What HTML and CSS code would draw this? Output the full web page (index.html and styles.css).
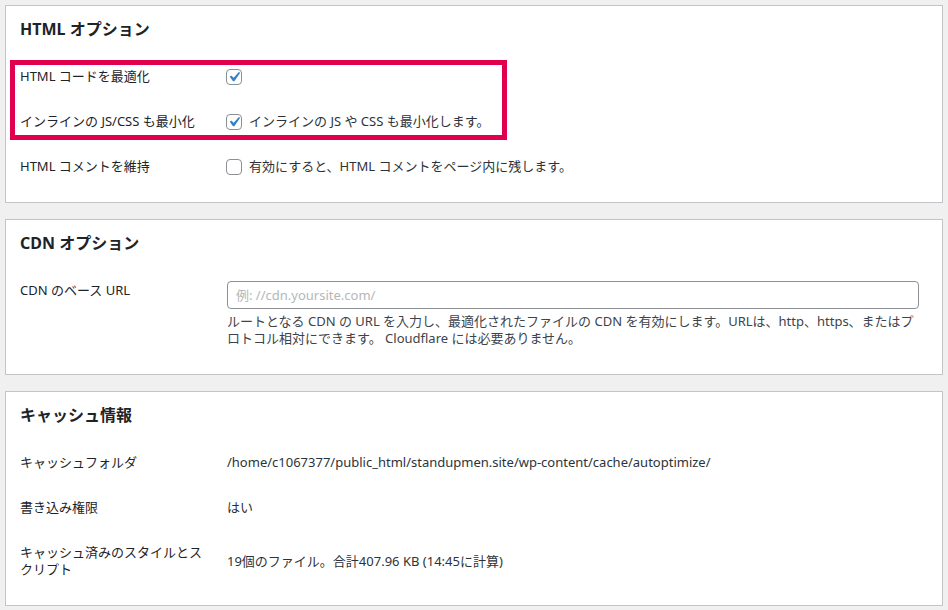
FILE: index.html
```html
<!DOCTYPE html>
<html lang="ja">
<head>
  <meta charset="UTF-8">
  <meta name="viewport" content="width=device-width, initial-scale=1.0">
  <title>Autoptimize 設定</title>
  <link rel="stylesheet" href="styles.css">
</head>
<body>
  <div class="panel panel-html">
    <h2>HTML オプション</h2>
    <div class="row">
      <div class="label">HTML コードを最適化</div>
      <div class="value">
        <span class="checkbox checked"><svg viewBox="0 0 20 20"><path d="M14.83 4.89l1.34.94-5.81 8.38H9.02L5.78 9.67l1.34-1.25 2.57 2.4z"/></svg></span>
      </div>
    </div>
    <div class="row">
      <div class="label">インラインの JS/CSS も最小化</div>
      <div class="value">
        <span class="checkbox checked"><svg viewBox="0 0 20 20"><path d="M14.83 4.89l1.34.94-5.81 8.38H9.02L5.78 9.67l1.34-1.25 2.57 2.4z"/></svg></span>
        <span>インラインの JS や CSS も最小化します。</span>
      </div>
    </div>
    <div class="row">
      <div class="label">HTML コメントを維持</div>
      <div class="value">
        <span class="checkbox"></span>
        <span>有効にすると、HTML コメントをページ内に残します。</span>
      </div>
    </div>
    <div class="highlight"></div>
  </div>

  <div class="panel">
    <h2>CDN オプション</h2>
    <div class="row row-top">
      <div class="label">CDN のベース URL</div>
      <div class="value value-stack">
        <input type="text" class="text-input" placeholder="例: //cdn.yoursite.com/">
        <p class="description">ルートとなる CDN の URL を入力し、最適化されたファイルの CDN を有効にします。URLは、http、https、またはプロトコル相対にできます。 Cloudflare には必要ありません。</p>
      </div>
    </div>
  </div>

  <div class="panel">
    <h2>キャッシュ情報</h2>
    <div class="row">
      <div class="label">キャッシュフォルダ</div>
      <div class="value">/home/c1067377/public_html/standupmen.site/wp-content/cache/autoptimize/</div>
    </div>
    <div class="row">
      <div class="label">書き込み権限</div>
      <div class="value">はい</div>
    </div>
    <div class="row">
      <div class="label">キャッシュ済みのスタイルとスクリプト</div>
      <div class="value">19個のファイル。合計407.96 KB (14:45に計算)</div>
    </div>
  </div>
</body>
</html>
```

FILE: styles.css
```css
body {
  margin: 0;
  padding: 5px;
  background-color: #f0f0f1;
  font-family: "Noto Sans", "Noto Sans CJK JP", sans-serif;
  font-size: 13px;
  line-height: 17px;
  color: #1d2327;
}
.panel {
  position: relative;
  background-color: #fff;
  border: 1px solid #c3c4c7;
  padding: 12px 14px 13px 14px;
  margin-bottom: 16px;
}
.panel:last-child {
  margin-bottom: 0;
}
h2 {
  margin: 0 0 14px 0;
  font-size: 16px;
  line-height: 22px;
  font-weight: bold;
  color: #1d2327;
}
.row {
  display: grid;
  grid-template-columns: 190px 1fr;
  column-gap: 16px;
  align-items: center;
  padding: 14px 0;
}
.row-top {
  align-items: start;
}
.label {
  color: #1d2327;
}
.value {
  display: flex;
  align-items: center;
  gap: 7px;
  color: #2c3338;
  padding-left: 1px;
}
.value-stack {
  display: block;
  margin-top: -1px;
}
.checkbox {
  position: relative;
  display: inline-block;
  width: 14px;
  height: 14px;
  border: 1px solid #8c8f94;
  border-radius: 4px;
  background-color: #fff;
  flex-shrink: 0;
  margin-left: -1px;
}
.checkbox svg {
  position: absolute;
  top: -3px;
  left: -3px;
  width: 20px;
  height: 20px;
  fill: #3582c4;
}
.text-input {
  display: block;
  box-sizing: border-box;
  width: 692px;
  height: 28px;
  margin: 0;
  padding: 0 8px;
  border: 1px solid #8c8f94;
  border-radius: 4px;
  font-family: "Noto Sans", "Noto Sans CJK JP", sans-serif;
  font-size: 13px;
  color: #2c3338;
}
.text-input::placeholder {
  color: #b4b7ba;
}
.description {
  margin: 4px 0 0 0;
  padding-right: 10px;
  color: #3c434a;
}
.highlight {
  position: absolute;
  left: 4px;
  top: 54px;
  width: 497px;
  height: 80px;
  box-sizing: border-box;
  border: 5px solid #e0004d;
  pointer-events: none;
}
```
